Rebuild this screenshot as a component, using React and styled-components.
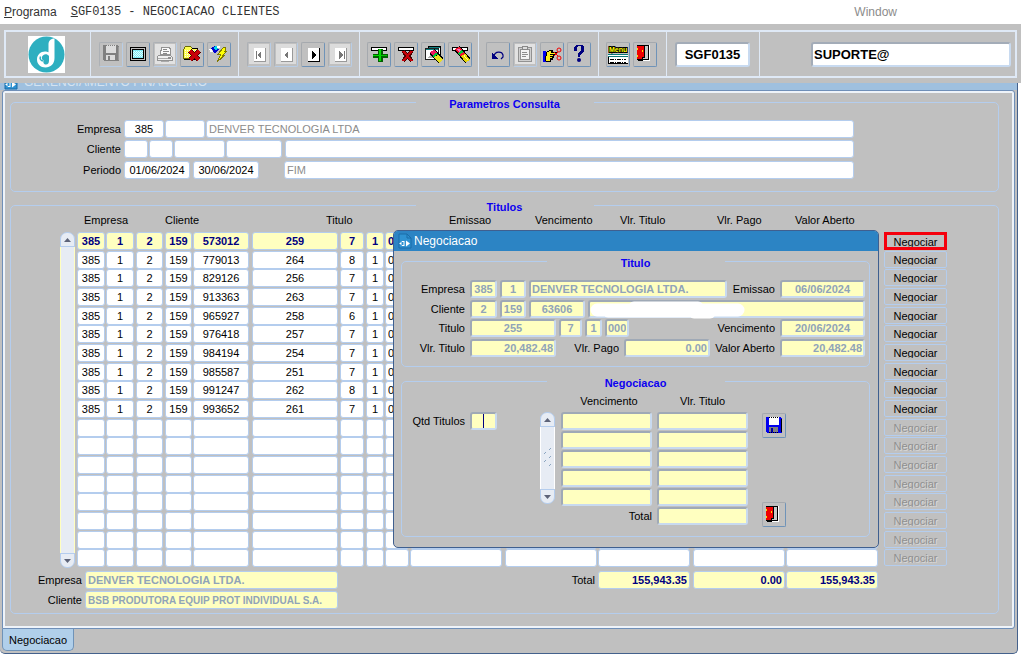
import React, { useState } from "react";
import styled, { createGlobalStyle, css } from "styled-components";

const GlobalStyle = createGlobalStyle`
  * {
    box-sizing: border-box;
  }

  body {
    margin: 0;
    background-color: #fff;
    font-family: "Liberation Sans", Arial, sans-serif;
    font-size: 11px;
    line-height: 12px;
    color: #000;
  }

  input, button {
    font-family: inherit;
    font-size: inherit;
  }
`;

const Page = styled.div`
  position: relative;
  display: flex;
  flex-direction: column;
  min-height: 100vh;
`;

// menu
const MenuBar = styled.nav`
  display: flex;
  align-items: center;
  height: 24px;
  padding: 0 124px 0 4px;
  font-size: 12px;
  color: #333;
`;

const MenuTitle = styled.h1`
  flex: 1;
  margin: 0 0 0 14px;
  font-family: "Liberation Mono", monospace;
  font-size: 12px;
  font-weight: normal;
`;

const MenuItem = styled.button`
  padding: 0;
  border: none;
  background: none;
  color: ${(props) => (props.$dim ? "#8c8c8c" : "#333")};
`;

// toolbar
const Toolbar = styled.header`
  height: 59px;
  padding: 6px 4px 5px;
  background-color: #c0c0c0;
`;

const ToolbarFrame = styled.div`
  display: flex;
  height: 48px;
  border: 2px solid #dfe9f6;
`;

const ToolGroup = styled.div`
  display: flex;
  flex: ${(props) => (props.$grow ? "1" : "none")};
  justify-content: ${(props) => props.$justify || "flex-start"};
  align-items: center;
  gap: 3px;
  width: ${(props) => (props.$width ? `${props.$width}px` : "auto")};
  padding: 0 4px 0 ${(props) => props.$pad || 7}px;
  border-right: 1px solid #dfe9f6;

  &:last-child {
    border-right: none;
  }
`;

const IconButton = styled.button`
  display: flex;
  justify-content: center;
  align-items: center;
  width: 24px;
  height: 25px;
  padding: 0;
  border: 1px solid;
  border-color: #a5a9ae #6f93b8 #6f93b8 #a5a9ae;
  border-radius: 2px;
  background-color: #c0c0c0;

  &:disabled {
    border-color: #acb0b5 #b8cde6 #b8cde6 #acb0b5;
  }

  svg {
    flex: none;
  }
`;

const ToolInput = styled.input`
  width: ${(props) => props.$width}px;
  height: 25px;
  padding: 0 1px;
  border: 2px solid;
  border-color: #a3acb8 #c8daf0 #c8daf0 #a3acb8;
  border-radius: 3px;
  font-size: 13px;
  font-weight: bold;
  text-align: ${(props) => props.$align || "left"};
`;

// form window
const FormWindow = styled.main`
  display: flex;
  flex-direction: column;
  margin-right: 3px;
  padding: 0 2px 0 2px;
  border-right: 1px solid #44618c;
  border-bottom: 1px solid #44618c;
  border-radius: 0 0 5px 5px;
  background-color: #c0c0c0;
`;

const WindowTitle = styled.div`
  display: flex;
  align-items: flex-end;
  gap: 6px;
  height: 7px;
  margin: 0 -2px;
  padding-left: 4px;
  overflow: hidden;
  background-color: #9fc0df;
  color: #d5e3f0;
  font-size: 12px;
  line-height: 16px;
`;

const Canvas = styled.div`
  padding: 3px 15px 14px 7px;
  border: 1px solid #6f8fb8;
  border-radius: 3px 3px 3px 0;
  box-shadow: inset 0 0 0 2px #eef3f9;
`;

const Group = styled.fieldset`
  min-width: 0;
  margin: ${(props) => props.$top || 0}px 0 0;
  padding: 0 0 ${(props) => props.$bottom}px;
  border: 1px solid #b4cdee;
  border-radius: 5px;
`;

const GroupTitle = styled.legend`
  width: 178px;
  height: 16px;
  margin: 0 auto;
  padding: 4px 0 0;
  text-align: center;
  font-weight: bold;
  color: #0c00f0;
`;

const Row = styled.div`
  display: flex;
  align-items: center;
  gap: ${(props) => props.$gap || 1}px;
  margin-bottom: ${(props) => props.$space || 2}px;
`;

const Label = styled.label`
  flex: none;
  width: ${(props) => (props.$width ? `${props.$width}px` : "auto")};
  padding-right: 2px;
  text-align: right;
  white-space: nowrap;
`;

const Spacer = styled.div`
  flex: ${(props) => (props.$width ? "none" : "1")};
  width: ${(props) => props.$width || 0}px;
`;

const Field = styled.input`
  display: block;
  flex: ${(props) => (props.$width ? "none" : "1")};
  width: ${(props) => (props.$width ? `${props.$width}px` : "100%")};
  min-width: 0;
  height: 18px;
  padding: 0 2px;
  border: 1px solid #b4cdee;
  border-radius: 3px;
  outline: none;
  background-color: ${(props) => (props.$yellow ? "#ffffc0" : "#fff")};
  color: ${(props) => props.$color || "#000"};
  font-size: ${(props) => (props.$small ? "10px" : "11px")};
  font-weight: ${(props) => (props.$bold ? "bold" : "normal")};
  text-align: ${(props) => props.$align || "center"};

  ${(props) =>
    props.$sunken &&
    css`
      border: 2px solid;
      border-color: #9fa9b6 #c8daf0 #c8daf0 #9fa9b6;
      padding: 0 1px;
    `}

  ${(props) =>
    props.$caret &&
    css`
      background-image: linear-gradient(#000080, #000080);
      background-size: 1px 100%;
      background-position: center;
      background-repeat: no-repeat;
    `}
`;

const ParamRows = styled.div`
  padding: 10px 144px 0 0;
`;

// titles table
const TitulosBody = styled.div`
  padding-top: 1px;
`;

const TableArea = styled.div`
  display: flex;
  gap: 2px;
  padding-left: 49px;
`;

const ScrollBar = styled.div`
  display: flex;
  flex-direction: column;
  flex: none;
  width: 15px;
  margin-top: ${(props) => props.$top}px;
`;

const ScrollArrow = styled.button`
  display: flex;
  justify-content: center;
  align-items: center;
  width: 15px;
  height: 15px;
  padding: 0;
  border: 1px solid #b4cdee;
  border-radius: ${(props) => (props.$down ? "0 0 7px 7px" : "7px 7px 0 0")};
  background-color: #e7ecf4;
`;

const ScrollTrack = styled.div`
  display: flex;
  justify-content: center;
  align-items: center;
  flex: 1;
  border: solid ${(props) => (props.$grip ? "#fff" : "#ffffc0")};
  border-width: 0 1px;
  background-color: #e7ecf4;
`;

const DataTable = styled.table`
  table-layout: fixed;
  width: ${(props) => props.$width}px;
  height: ${(props) => (props.$height ? `${props.$height}px` : "auto")};
  border-spacing: 0;

  th {
    height: ${(props) => props.$head}px;
    padding: 0;
    vertical-align: top;
    font-weight: normal;
    white-space: nowrap;
  }

  td {
    padding: 0;
    vertical-align: top;
  }
`;

const HeadCell = styled.th`
  && {
    padding-left: ${(props) => props.$indent}px;
    text-align: left;
  }
`;

const Cell = styled.td`
  && {
    padding-right: ${(props) => props.$gap || 0}px;
  }
`;

const NegociarButton = styled.button`
  display: block;
  width: 100%;
  height: 17px;
  padding: 0;
  border: 1px solid #b4cdee;
  border-radius: 2px;
  background-color: #c0c0c0;
  line-height: 12px;

  &:disabled {
    color: #8f8f8f;
    text-shadow: 1px 1px 0 #d8d8d8;
  }

  ${(props) =>
    props.$marked &&
    css`
      height: 18px;
      border: 3px solid #f5000c;
      border-radius: 0;
    `}

  span {
    display: block;
    height: 11px;
    overflow: hidden;
  }
`;

const TableFooter = styled.div`
  display: flex;
  align-items: flex-start;
  margin-top: 3px;
`;

const FooterNames = styled.div`
  width: 327px;
`;

const FooterTotals = styled.div`
  display: flex;
  align-items: center;
`;

const TabStrip = styled.div`
  display: flex;
  height: 24px;
`;

const Tab = styled.button`
  height: 22px;
  padding: 0 6px 0 6px;
  border: 1px solid #6f93b8;
  border-top: none;
  border-radius: 0 0 5px 5px;
  background-color: #b0cfea;
`;

// dialog
const Dialog = styled.section`
  position: absolute;
  top: 230px;
  left: 393px;
  width: 486px;
  padding-bottom: 10px;
  border: 1px solid #3f5f8f;
  border-radius: 5px;
  background-color: #c0c0c0;
`;

const DialogTitle = styled.h2`
  display: flex;
  align-items: center;
  gap: 2px;
  height: 20px;
  margin: 0;
  padding-left: 4px;
  border-radius: 4px 4px 0 0;
  background-color: #2c84c4;
  color: #fff;
  font-size: 12px;
  font-weight: normal;
`;

const DialogBody = styled.div`
  padding: 2px 8px 0 7px;
`;

const DialogRows = styled.div`
  padding: 11px 4px 0 0;
`;

const DialogGrid = styled.div`
  display: flex;
  align-items: flex-start;
`;

const QtdBox = styled.div`
  width: 138px;
  padding-top: 23px;
`;

const DialogScroll = styled(ScrollBar)`
  height: 92px;
`;

const DialogTable = styled.div`
  padding: 6px 14px 0 6px;
`;

const ParcelaRow = styled.tr`
  height: 19px;
`;

const TotalCell = styled.td`
  && {
    padding: 3px 3px 0 0;
    text-align: right;
  }
`;

const DialogButtons = styled.div`
  display: flex;
  flex-direction: column;
  gap: 64px;
  padding-top: 24px;
`;

const NameBox = styled.div`
  position: relative;
  flex: 1;

  svg {
    position: absolute;
    top: 0;
    left: 0;
  }
`;

const soft = "#90a4b8";
const navy = "#000080";

const Svg = ({ children }) => (
  <svg width="20" height="20" viewBox="0 0 20 20" shapeRendering="crispEdges" aria-hidden="true">
    {children}
  </svg>
);

const FloppyIcon = ({ gray }) => (
  <Svg>
    <path d="M2 1h15v1h1v15h-15v-1h-1z" fill={gray ? "#808080" : "#0000f0"} />
    <path d="M5 1h10v8h-10z" fill={gray ? "#dcdcdc" : "#fff"} />
    <path d="M5 1.500h10M5 16.500h10" stroke={gray ? "#808080" : "#000"} strokeDasharray="1 1" />
    <path d="M17.500 3v13" fill="none" stroke={gray ? "#999" : "#000"} />
    <path d="M5 11h9v5h-9z" fill={gray ? "#dcdcdc" : "#808080"} />
    <path d="M7 12h2v4h-2z" fill={gray ? "#808080" : "#0000a0"} />
  </Svg>
);

const ScreenIcon = () => (
  <Svg>
    <rect x="2" y="3" width="16" height="14" rx="1" fill="#000" />
    <rect x="3" y="4" width="14" height="12" fill="#c0c0c0" />
    <rect x="4" y="5" width="12" height="10" fill="#000" />
    <rect x="5" y="6" width="10" height="8" fill="#7fe8f4" />
    <path d="M6 7.500h9M6 9.500h9M6 11.500h9M5 8.500h9M5 10.500h9M5 12.500h9" stroke="#e0ffff" strokeDasharray="1 1" />
  </Svg>
);

const PrinterIcon = () => (
  <Svg>
    <rect width="20" height="20" fill="#e2e2e2" />
    <path d="M6.500 3.500h8l1 2v5h-10v-4h1z" fill="#fafafa" stroke="#929292" />
    <path d="M8 5.500h4M8 7.500h6M8 9.500h4" stroke="#888" />
    <path d="M3.500 11.500h12l2 2v3h-15v-4z" fill="#f0f0f0" stroke="#929292" />
    <path d="M3 14.500h12M6 17.500h8" stroke="#aaa" />
    <path d="M13 13h3v2h-3z" fill="#909090" />
  </Svg>
);

const FolderIcon = () => (
  <Svg>
    <path d="M1.500 14.500v-9l2-3h5l2 2h5v10z" fill="#ffff50" stroke="#6c6c00" />
    <path d="M3 6.500h12M3 8.500h12M3 10.500h12M3 12.500h12" stroke="#fffff0" strokeDasharray="1 1" />
    <path d="M10 4.500h6M2 15.500h14" stroke="#000" />
    <path d="M8 7l9 9M17 7l-9 9" stroke="#500000" strokeWidth="5" />
    <path d="M8 7l9 9M17 7l-9 9" stroke="#c80008" strokeWidth="3" />
  </Svg>
);

const FlashIcon = () => (
  <Svg>
    <path d="M2 4l4-2 4 3-4 5z" fill="#0000d0" />
    <path d="M4 4l3-2 3 1-3 3z" fill="#00d8e8" />
    <path d="M8 2.500h3M1 5l2 3" stroke="#fff" strokeWidth="2" />
    <path d="M17 3h-2l-6 7h3l-4 8 8-7h-2l4-4h-2z" fill="#ffff00" stroke="#807800" />
  </Svg>
);

const NavIcon = ({ dir, end, off }) => {
  const color = off ? "#777" : "#000";
  return (
    <Svg>
      {off && <rect width="20" height="20" fill="#dcdcdc" />}
      <path d="M5 4h11v13h-11z" fill="#fff" />
      <path d="M5 17.500h12M16.500 4v14" stroke={off ? "#999" : "#000"} />
      {dir === "left" ? (
        <path d="M12 7v8l-4-4z" fill={color} />
      ) : (
        <path d="M9 7v8l4-4z" fill={color} />
      )}
      {end && <path d={dir === "left" ? "M7.500 7v8" : "M14.500 7v8"} stroke={color} />}
    </Svg>
  );
};

const Bar = () => <path d="M2.500 3.500h15v3h-15z" fill="#fff" stroke="#000" />;

const PlusIcon = () => (
  <Svg>
    <Bar />
    <path d="M9 5h5v5h5v4h-5v4h-5v-4h-5v-4h5z" fill="#006000" />
    <path d="M10 5h2v6h6v1h-6v5h-2v-5h-6v-1h6z" fill="#00e000" />
    <path d="M10 11h8v1h-8z" fill="#00c800" />
  </Svg>
);

const RemoveIcon = () => (
  <Svg>
    <Bar />
    <path d="M7 7l9 10M16 7l-9 10" stroke="#480000" strokeWidth="4" />
    <path d="M7 7l9 10M16 7l-9 10" stroke="#c80008" strokeWidth="2" />
  </Svg>
);

// pencil made of coloured segments along one diagonal
const Pencil = () => (
  <g>
    <path d="M7 4l11 13" stroke="#000" strokeWidth="7" />
    <path d="M7 4l3 3.500" stroke="#f01830" strokeWidth="5" />
    <path d="M8 5l2 2.400" stroke="#ff70c0" strokeWidth="2" />
    <path d="M10 7.500l1.500 2" stroke="#00c838" strokeWidth="5" />
    <path d="M11.500 9.300l1.500 2" stroke="#f01830" strokeWidth="5" />
    <path d="M13 11l5 6" stroke="#e8d800" strokeWidth="5" />
    <path d="M14 11.500l4 4.700" stroke="#ffff90" />
  </g>
);

const QueryIcon = () => (
  <Svg>
    <path d="M5.500 2.500h12v13h-12z" fill="#fff" stroke="#000" />
    <path d="M2.500 4.500h13v11h-13z" fill="#fff" stroke="#222" />
    <path d="M3 5.500h12M6 3.500h11" stroke="#108080" />
    <path d="M4 14l5-5 2 5z" fill="#b0b0b0" />
    <path d="M9 7l9 10" stroke="#000" strokeWidth="7" />
    <path d="M9 7l3 3.500" stroke="#f01860" strokeWidth="5" />
    <path d="M11.500 10l1.500 1.800" stroke="#00c838" strokeWidth="5" />
    <path d="M13 12l5 5.500" stroke="#e8e020" strokeWidth="5" />
  </Svg>
);

const ClearIcon = () => (
  <Svg>
    <Bar />
    <Pencil />
  </Svg>
);

const UndoIcon = () => (
  <Svg>
    <path d="M6 12c1-5 8-5 9-1v2l-2 2" fill="none" stroke="#000080" strokeWidth="1.200" shapeRendering="auto" />
    <path d="M4 9v6h6z" fill="#000080" />
  </Svg>
);

const ClipboardIcon = () => (
  <Svg>
    <rect width="20" height="20" fill="#e2e2e2" />
    <path d="M3.500 3.500h13v14h-13z" fill="#d0d0d0" stroke="#929292" />
    <path d="M5.500 5.500h9v10h-9z" fill="#f4f4f4" stroke="#929292" />
    <path d="M7.500 2.500h5v3h-5z" fill="#ddd" stroke="#888" />
    <path d="M7 8.500h5M7 10.500h6M7 12.500h4" stroke="#8d8d8d" />
  </Svg>
);

const HandIcon = () => (
  <Svg>
    <path d="M1 7h3v11h-3z" fill="#0000f0" />
    <path d="M4.500 8.500l3-2h3l-1 2h5v2h-3v3h-1v2h-2v2h-4l-1-1z" fill="#ffee20" stroke="#000" />
    <path d="M8 10.500h4M8 12.500h3M8 14.500h2" stroke="#000" />
    <g fill="none" stroke="#f00000" shapeRendering="auto">
      <circle cx="17" cy="6" r="2" />
      <circle cx="17" cy="14" r="2" />
      <path d="M12 12l4-4M12 8l4 4" />
    </g>
  </Svg>
);

const HelpIcon = () => (
  <Svg>
    <path
      d="M5 7v-3l2-3h6l2 2v5l-3 2-1 3h-2v-4l3-3v-3l-1-1h-2l-1 1v4z"
      fill="#000080"
    />
    <circle cx="10" cy="16" r="2" fill="#000080" shapeRendering="auto" />
  </Svg>
);

const MenuIcon = () => (
  <Svg>
    <path d="M0 11h20v9h-20z" fill="#fff" />
    <path d="M0 10.500h20M0 12.500h20" stroke="#087878" />
    <path d="M2 15.500h16M2 18.500h16" stroke="#000" strokeDasharray="4 1 1 1" />
    <path d="M.500 13v7M0 19.500h20" stroke="#000" />
    <text
      x="1"
      y="8"
      fontFamily="Liberation Sans"
      fontSize="7"
      fontWeight="bold"
      fill="#ffff00"
      stroke="#000"
      strokeWidth="2"
      paintOrder="stroke"
    >
      Menu
    </text>
  </Svg>
);

const DoorIcon = () => (
  <Svg>
    <path d="M2.500 1.500h11v14h-11z" fill="#c8c8c8" stroke="#000" />
    <path d="M14.500 1v15.500h-10" fill="none" stroke="#fff" />
    <path d="M2 2h7v11l-2 2h-5z" fill="#f00000" />
    <path d="M9.500 2v11h-2v3h-5" fill="none" stroke="#000" />
    <path d="M2 5h1M2 12h1M7 7h1" stroke="#ffe000" strokeWidth="2" />
  </Svg>
);

const Logo = () => (
  <svg width="37" height="37" viewBox="0 0 37 37" role="img" aria-label="Logo">
    <rect width="37" height="37" fill="#fff" />
    <circle cx="18.500" cy="18.500" r="18" fill="#2eafc0" />
    <path
      d="M26.500 2.500V22c0 6-4 9.500-9 9.500s-8.500-3.500-8.500-8 3.500-8 8-8c1.500 0 2.500.300 3.500.800V8c0-3 2-5.500 6-5.500z"
      fill="#fff"
    />
    <path
      d="M21 20c-1.500-2-4-2-5.500-1-2.500 1.500-2 5 .500 5.500-1.500 2 0 4 2 4s3-1.500 3-4z"
      fill="#2eafc0"
    />
    <path d="M12.500 20.500c-1 2 0 4.500 3 4.500" fill="none" stroke="#2eafc0" strokeWidth="1.500" />
  </svg>
);

const WindowIcon = () => (
  <svg width="14" height="16" viewBox="0 0 14 16" aria-hidden="true">
    <path d="M1 1h8l4 4v10H1z" fill="#2f92d2" stroke="#1b6ca8" />
    <path d="M9 1v4h4" fill="none" stroke="#1b6ca8" />
    <path d="M6 8.500H4l-1 1v2l1 1h2M6 8v5M1.500 10.500H3" fill="none" stroke="#fff" />
    <path d="M8 7.500v6l4-3z" fill="#fff" />
  </svg>
);

const Arrow = ({ down }) => (
  <svg width="7" height="4" viewBox="0 0 7 4" aria-hidden="true">
    <path d={down ? "M0 0h7L3.500 4z" : "M0 4h7L3.500 0z"} fill="#5d6378" />
  </svg>
);

const tools = [
  {
    width: 148,
    pad: 8,
    items: [
      ["Salvar", <FloppyIcon gray />, true],
      ["Tela", <ScreenIcon />],
      ["Imprimir", <PrinterIcon />, true],
      ["Fechar", <FolderIcon />],
      ["Executar", <FlashIcon />],
    ],
  },
  {
    width: 121,
    pad: 8,
    items: [
      ["Primeiro", <NavIcon dir="left" end off />, true],
      ["Anterior", <NavIcon dir="left" off />, true],
      ["Proximo", <NavIcon dir="right" />],
      ["Ultimo", <NavIcon dir="right" end off />, true],
    ],
  },
  {
    width: 119,
    items: [
      ["Inserir", <PlusIcon />],
      ["Remover", <RemoveIcon />],
      ["Consultar", <QueryIcon />],
      ["Limpar", <ClearIcon />],
    ],
  },
  {
    width: 120,
    items: [
      ["Desfazer", <UndoIcon />],
      ["Lista", <ClipboardIcon />, true],
      ["Recortar", <HandIcon />],
      ["Ajuda", <HelpIcon />],
    ],
  },
  {
    width: 68,
    items: [
      ["Menu", <MenuIcon />],
      ["Sair", <DoorIcon />],
    ],
  },
];

// [largura, espaco]
const columns = [
  [29, 1], [30, 2], [29, 2], [28, 1], [59, 3], [88, 2], [26, 2], [19, 1],
  [25, 1], [95, 3], [93, 1], [95, 3], [93, 1], [98, 6], [63, 0],
];

const titulos = [
  ["385", "1", "2", "159", "573012", "259", "7", "1", "000"],
  ["385", "1", "2", "159", "779013", "264", "8", "1", "000"],
  ["385", "1", "2", "159", "829126", "256", "7", "1", "000"],
  ["385", "1", "2", "159", "913363", "263", "7", "1", "000"],
  ["385", "1", "2", "159", "965927", "258", "6", "1", "000"],
  ["385", "1", "2", "159", "976418", "257", "7", "1", "000"],
  ["385", "1", "2", "159", "984194", "254", "7", "1", "000"],
  ["385", "1", "2", "159", "985587", "251", "7", "1", "000"],
  ["385", "1", "2", "159", "991247", "262", "8", "1", "000"],
  ["385", "1", "2", "159", "993652", "261", "7", "1", "000"],
  [], [], [], [], [], [], [], [],
];

const SoftField = (props) => (
  <Field $yellow $bold $sunken $color={soft} readOnly {...props} />
);

const ParametrosConsulta = () => {
  const [inicio, setInicio] = useState("01/06/2024");
  const [fim, setFim] = useState("30/06/2024");

  return (
    <Group $bottom={10}>
      <GroupTitle>Parametros Consulta</GroupTitle>
      <ParamRows>
        <Row>
          <Label $width={112} htmlFor="empresa">Empresa</Label>
          <Field id="empresa" $width={40} defaultValue="385" />
          <Field aria-label="Filial" $width={40} />
          <Field aria-label="Nome da empresa" $align="left" $color="#8c8c8c" defaultValue="DENVER TECNOLOGIA LTDA" />
        </Row>
        <Row $space={3}>
          <Label $width={112} htmlFor="cliente">Cliente</Label>
          <Field id="cliente" $width={24} />
          <Field aria-label="Cliente 2" $width={24} />
          <Field aria-label="Cliente 3" $width={51} />
          <Field aria-label="Cliente 4" $width={56} />
          <Spacer $width={1} />
          <Field aria-label="Nome do cliente" />
        </Row>
        <Row>
          <Label $width={112} htmlFor="periodo">Periodo</Label>
          <Field id="periodo" $width={66} value={inicio} onChange={(e) => setInicio(e.target.value)} />
          <Spacer $width={1} />
          <Field aria-label="Periodo final" $width={66} value={fim} onChange={(e) => setFim(e.target.value)} />
          <Spacer $width={23} />
          <Field aria-label="Tipo" $align="left" $color="#8c8c8c" defaultValue="FIM" />
        </Row>
      </ParamRows>
    </Group>
  );
};

const Titulos = () => (
  <Group $top={5} $bottom={2}>
    <GroupTitle>Titulos</GroupTitle>
    <TitulosBody>
      <TableArea>
        <ScrollBar $top={18}>
          <ScrollArrow aria-label="Subir"><Arrow /></ScrollArrow>
          <ScrollTrack />
          <ScrollArrow $down aria-label="Descer"><Arrow down /></ScrollArrow>
        </ScrollBar>
        <DataTable $width={870} $height={354} $head={18}>
          <colgroup>
            {columns.map(([width], i) => (
              <col key={i} width={width} />
            ))}
          </colgroup>
          <thead>
            <tr>
              <HeadCell colSpan={2} $indent={7}>Empresa</HeadCell>
              <HeadCell colSpan={3} $indent={29}>Cliente</HeadCell>
              <HeadCell colSpan={4} $indent={74}>Titulo</HeadCell>
              <HeadCell $indent={39}>Emissao</HeadCell>
              <HeadCell $indent={30}>Vencimento</HeadCell>
              <HeadCell $indent={22}>Vlr. Titulo</HeadCell>
              <HeadCell $indent={24}>Vlr. Pago</HeadCell>
              <HeadCell $indent={9}>Valor Aberto</HeadCell>
              <td />
            </tr>
          </thead>
          <tbody>
            {titulos.map((titulo, row) => (
              <tr key={row}>
                {columns.slice(0, -1).map(([, gap], col) => (
                  <Cell key={col} $gap={gap}>
                    <Field
                      aria-label={`Linha ${row + 1}, coluna ${col + 1}`}
                      $yellow={row === 0}
                      $bold={row === 0}
                      $color={row === 0 ? navy : "#000"}
                      readOnly
                      value={titulo[col] || ""}
                    />
                  </Cell>
                ))}
                <Cell>
                  <NegociarButton $marked={row === 0} disabled={!titulo.length}>
                    <span>Negociar</span>
                  </NegociarButton>
                </Cell>
              </tr>
            ))}
          </tbody>
        </DataTable>
      </TableArea>
      <TableFooter>
        <FooterNames>
          <Row>
            <Label $width={73} htmlFor="nomeEmpresa">Empresa</Label>
            <Field id="nomeEmpresa" $yellow $bold $align="left" $color={soft} readOnly value="DENVER TECNOLOGIA LTDA." />
          </Row>
          <Row>
            <Label $width={73} htmlFor="nomeCliente">Cliente</Label>
            <Field id="nomeCliente" $yellow $bold $small $align="left" $color={soft} readOnly value="BSB PRODUTORA EQUIP PROT INDIVIDUAL S.A." />
          </Row>
        </FooterNames>
        <FooterTotals>
          <Label $width={259} htmlFor="total">Total</Label>
          <Spacer $width={1} />
          <Field id="total" $yellow $bold $color={navy} $align="right" $width={92} readOnly value="155,943.35" />
          <Spacer $width={3} />
          <Field aria-label="Total pago" $yellow $bold $color={navy} $align="right" $width={92} readOnly value="0.00" />
          <Spacer $width={1} />
          <Field aria-label="Total aberto" $yellow $bold $color={navy} $align="right" $width={92} readOnly value="155,943.35" />
        </FooterTotals>
      </TableFooter>
    </TitulosBody>
  </Group>
);

const NegociacaoDialog = () => (
  <Dialog role="dialog" aria-label="Negociacao">
    <DialogTitle><WindowIcon />Negociacao</DialogTitle>
    <DialogBody>
      <Group $bottom={7}>
        <GroupTitle>Titulo</GroupTitle>
        <DialogRows>
          <Row $gap={3}>
            <Label $width={65} htmlFor="dEmpresa">Empresa</Label>
            <SoftField id="dEmpresa" $width={27} value="385" />
            <SoftField aria-label="Filial" $width={26} value="1" />
            <SoftField aria-label="Nome da empresa" $align="left" value="DENVER TECNOLOGIA LTDA." />
            <Label $width={47} htmlFor="dEmissao">Emissao</Label>
            <SoftField id="dEmissao" $width={85} value="06/06/2024" />
          </Row>
          <Row $gap={3} $space={1}>
            <Label $width={65} htmlFor="dCliente">Cliente</Label>
            <SoftField id="dCliente" $width={27} value="2" />
            <SoftField aria-label="Cliente 2" $width={26} value="159" />
            <SoftField aria-label="Cliente 3" $width={56} value="63606" />
            <NameBox>
              <SoftField aria-label="Nome do cliente" value="" />
              <svg width="160" height="20" viewBox="0 0 160 20" aria-hidden="true">
                <path
                  d="M9 10H80M20 11H118M46 8H110M75 10H150M106 12H122"
                  stroke="#fff"
                  strokeWidth="13"
                  strokeLinecap="round"
                />
              </svg>
            </NameBox>
          </Row>
          <Row $gap={3}>
            <Label $width={65} htmlFor="dTitulo">Titulo</Label>
            <SoftField id="dTitulo" $width={86} value="255" />
            <SoftField aria-label="Parcela" $width={23} value="7" />
            <SoftField aria-label="Sequencia" $width={17} value="1" />
            <SoftField aria-label="Complemento" $width={24} value="000" />
            <Spacer />
            <Label htmlFor="dVencimento">Vencimento</Label>
            <SoftField id="dVencimento" $width={85} value="20/06/2024" />
          </Row>
          <Row $gap={3}>
            <Label $width={65} htmlFor="dValor">Vlr. Titulo</Label>
            <SoftField id="dValor" $width={86} $align="right" value="20,482.48" />
            <Label $width={62} htmlFor="dPago">Vlr. Pago</Label>
            <SoftField id="dPago" $width={86} $align="right" value="0.00" />
            <Label $width={64} htmlFor="dAberto">Valor Aberto</Label>
            <SoftField id="dAberto" $width={85} $align="right" value="20,482.48" />
          </Row>
        </DialogRows>
      </Group>

      <Group $top={6} $bottom={9}>
        <GroupTitle>Negociacao</GroupTitle>
        <DialogGrid>
          <QtdBox>
            <Row $gap={3}>
              <Label $width={65} htmlFor="qtd">Qtd Titulos</Label>
              <Field id="qtd" $yellow $sunken $caret $width={27} />
            </Row>
          </QtdBox>
          <DialogScroll $top={23}>
            <ScrollArrow aria-label="Subir"><Arrow /></ScrollArrow>
            <ScrollTrack $grip>
              <svg width="9" height="20" viewBox="0 0 9 20" aria-hidden="true">
                <path
                  d="M6 2l2-2M1 6l2-2M6 10l2-2M1 14l2-2M6 18l2-2"
                  stroke="#8ba5c0"
                />
              </svg>
            </ScrollTrack>
            <ScrollArrow $down aria-label="Descer"><Arrow down /></ScrollArrow>
          </DialogScroll>
          <DialogTable>
            <DataTable $width={187} $head={17}>
              <colgroup>
                <col width="96" />
                <col width="91" />
              </colgroup>
              <thead>
                <tr>
                  <th>Vencimento</th>
                  <th>Vlr. Titulo</th>
                </tr>
              </thead>
              <tbody>
                {[1, 2, 3, 4, 5].map((n) => (
                  <ParcelaRow key={n}>
                    <Cell $gap={5}><Field aria-label={`Vencimento ${n}`} $yellow $sunken /></Cell>
                    <td><Field aria-label={`Valor ${n}`} $yellow $sunken $align="right" /></td>
                  </ParcelaRow>
                ))}
              </tbody>
              <tfoot>
                <tr>
                  <TotalCell><Label htmlFor="dTotal">Total</Label></TotalCell>
                  <td><Field id="dTotal" $yellow $sunken $align="right" /></td>
                </tr>
              </tfoot>
            </DataTable>
          </DialogTable>
          <DialogButtons>
            <IconButton aria-label="Salvar"><FloppyIcon /></IconButton>
            <IconButton aria-label="Sair"><DoorIcon /></IconButton>
          </DialogButtons>
        </DialogGrid>
      </Group>
    </DialogBody>
  </Dialog>
);

const App = () => (
  <Page>
    <GlobalStyle />
    <MenuBar>
      <MenuItem><u>P</u>rograma</MenuItem>
      <MenuTitle><u>S</u>GF0135 - NEGOCIACAO CLIENTES</MenuTitle>
      <MenuItem $dim>Window</MenuItem>
    </MenuBar>

    <Toolbar>
      <ToolbarFrame>
        <ToolGroup $width={85} $pad={22}><Logo /></ToolGroup>
        {tools.map((group) => (
          <ToolGroup key={group.width} $width={group.width} $pad={group.pad}>
            {group.items.map(([name, icon, off]) => (
              <IconButton key={name} aria-label={name} disabled={off}>{icon}</IconButton>
            ))}
          </ToolGroup>
        ))}
        <ToolGroup $width={93} $pad={8}>
          <ToolInput aria-label="Programa" $width={75} $align="center" defaultValue="SGF0135" />
        </ToolGroup>
        <ToolGroup $grow $justify="flex-end">
          <ToolInput aria-label="Usuario" $width={200} defaultValue="SUPORTE@" />
        </ToolGroup>
      </ToolbarFrame>
    </Toolbar>

    <FormWindow>
      <WindowTitle><WindowIcon />GERENCIAMENTO FINANCEIRO</WindowTitle>
      <Canvas>
        <ParametrosConsulta />
        <Titulos />
      </Canvas>
      <TabStrip>
        <Tab>Negociacao</Tab>
      </TabStrip>
    </FormWindow>

    <NegociacaoDialog />
  </Page>
);

export default App;
